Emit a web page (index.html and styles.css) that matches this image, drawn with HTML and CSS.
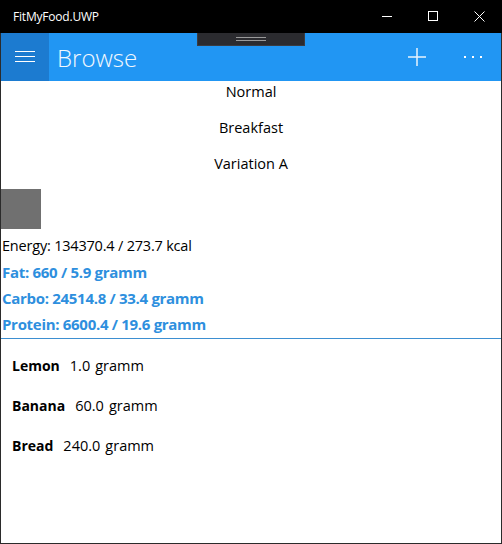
FILE: index.html
```html
<!DOCTYPE html>
<html>
<head>
<meta charset="utf-8">
<link rel="stylesheet" href="styles.css">
</head>
<body>
<div class="window">
  <div class="titlebar">
    <span class="title">FitMyFood.UWP</span>
    <div class="controls">
      <span class="ctl"><svg width="10" height="10" viewBox="0 0 10 10"><path d="M0 5.5H10" stroke="#fff" stroke-width="1"/></svg></span>
      <span class="ctl"><svg width="10" height="10" viewBox="0 0 10 10"><rect x="0.5" y="0.5" width="9" height="9" fill="none" stroke="#fff" stroke-width="1"/></svg></span>
      <span class="ctl"><svg width="11" height="11" viewBox="0 0 11 11"><path d="M0.5 0.5L10.5 10.5M10.5 0.5L0.5 10.5" stroke="#fff" stroke-width="1"/></svg></span>
    </div>
  </div>
  <div class="appbar">
    <div class="hamburger">
      <svg width="20" height="12" viewBox="0 0 20 12"><path d="M0 0.5H20M0 5.5H20M0 10.5H20" stroke="#fff" stroke-width="1"/></svg>
    </div>
    <div class="page-title">Browse</div>
    <div class="actions">
      <span class="act plus"><svg width="18" height="18" viewBox="0 0 18 18"><path d="M9 0V18M0 9H18" stroke="#e8f3fd" stroke-width="1.5"/></svg></span>
      <span class="act more"><svg width="18" height="4" viewBox="0 0 18 4"><rect x="0" y="1" width="2" height="2" fill="#fff"/><rect x="8" y="1" width="2" height="2" fill="#fff"/><rect x="16" y="1" width="2" height="2" fill="#fff"/></svg></span>
    </div>
    <div class="grip"><span class="grip-lines"></span></div>
  </div>
  <div class="content">
    <div class="centered">
      <div class="cline">Normal</div>
      <div class="cline">Breakfast</div>
      <div class="cline">Variation A</div>
    </div>
    <div class="thumb"></div>
    <div class="stats">
      <div class="stat">Energy: 134370.4 / 273.7 kcal</div>
      <div class="stat accent">Fat: 660 / 5.9 gramm</div>
      <div class="stat accent">Carbo: 24514.8 / 33.4 gramm</div>
      <div class="stat accent">Protein: 6600.4 / 19.6 gramm</div>
    </div>
    <div class="divider"></div>
    <div class="list">
      <div class="item"><span class="name">Lemon</span><span class="amt">1.0</span><span class="unit">gramm</span></div>
      <div class="item"><span class="name">Banana</span><span class="amt">60.0</span><span class="unit">gramm</span></div>
      <div class="item"><span class="name">Bread</span><span class="amt">240.0</span><span class="unit">gramm</span></div>
    </div>
  </div>
</div>
</body>
</html>
```
FILE: styles.css
```css
* { box-sizing: border-box; }
html, body { margin: 0; padding: 0; }
body {
  width: 502px;
  height: 544px;
  overflow: hidden;
  font-family: "Open Sans", "Noto Sans", sans-serif;
  background: #fff;
}
.window {
  width: 502px;
  height: 544px;
  border: 1px solid #2b2b2b;
  border-top: none;
  display: flex;
  flex-direction: column;
  background: #fff;
}
.titlebar {
  height: 33px;
  flex: none;
  background: #000;
  margin: 0 -1px;
  display: flex;
  align-items: center;
  justify-content: space-between;
  color: #fff;
}
.title {
  font-size: 12px;
  padding-left: 13px;
  letter-spacing: -0.2px;
  margin-top: -1px;
}
.controls {
  display: flex;
  height: 100%;
}
.ctl {
  width: 46px;
  height: 100%;
  display: flex;
  align-items: center;
  justify-content: center;
  padding-bottom: 1px;
}
.appbar {
  height: 48px;
  flex: none;
  background: #2196f3;
  display: flex;
  align-items: center;
  position: relative;
}
.hamburger {
  width: 48px;
  height: 100%;
  background: #1c7bd0;
  display: flex;
  align-items: center;
  justify-content: center;
}
.page-title {
  color: #f2f8fe;
  font-size: 24px;
  font-weight: 300;
  margin-left: 8px;
  margin-top: 0;
  flex: 1;
}
.actions {
  display: flex;
  height: 100%;
  align-items: center;
}
.act {
  height: 100%;
  display: flex;
  align-items: center;
  justify-content: center;
}
.plus { width: 56px; }
.more { width: 56px; }
.grip {
  position: absolute;
  left: 196px;
  top: 0;
  width: 108px;
  height: 13px;
  background: #2b2b2f;
  border: 1px solid #3b3b40;
  border-top: none;
  display: flex;
  justify-content: center;
  align-items: center;
}
.grip-lines {
  width: 30px;
  height: 4px;
  border-top: 1px solid #9a9a9a;
  border-bottom: 1px solid #9a9a9a;
}
.content {
  flex: 1;
  color: #000;
  font-size: 14.5px;
  padding-top: 1px;
}
.centered {
  display: flex;
  flex-direction: column;
  align-items: center;
  gap: 16px;
}
.cline {
  line-height: 20px;
  height: 20px;
}
.thumb {
  width: 40px;
  height: 40px;
  background: #707070;
  margin-top: 15px;
}
.stats {
  margin-top: 7px;
  display: flex;
  flex-direction: column;
  gap: 6px;
  padding-left: 1px;
}
.stat {
  line-height: 20px;
  height: 20px;
  letter-spacing: -0.2px;
}
.accent {
  color: #2e8fde;
  font-weight: 700;
  font-size: 15px;
  letter-spacing: -0.3px;
}
.divider {
  height: 1px;
  background: #3d8fd1;
  margin-top: 4px;
}
.list {
  display: flex;
  flex-direction: column;
  gap: 20px;
  padding: 17px 0 0 11px;
}
.item {
  line-height: 20px;
  height: 20px;
  display: flex;
}
.name {
  font-weight: 700;
  font-size: 14px;
  margin-right: 10px;
}
.unit {
  margin-left: 5px;
}
```
